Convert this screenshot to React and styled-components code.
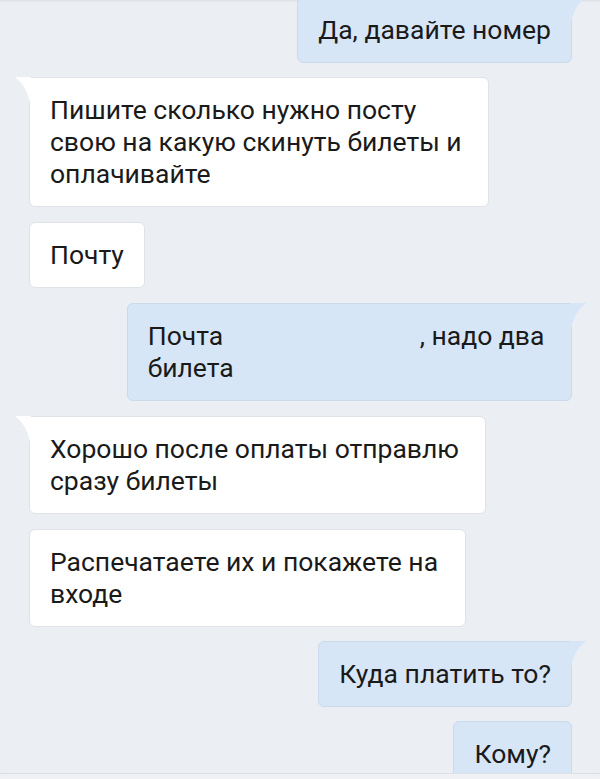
import React from 'react';
import styled, { createGlobalStyle } from 'styled-components';

const GlobalStyle = createGlobalStyle`
  html, body {
    margin: 0;
    padding: 0;
  }
  body {
    background: #ebeef3;
    font-family: Roboto, "Noto Sans", "Liberation Sans", sans-serif;
  }
`;

const Screen = styled.div`
  height: 779px;
  display: flex;
  flex-direction: column;
  overflow: hidden;
  background: #ebeef3;
`;

const Feed = styled.div`
  position: relative;
  flex: 1;
  overflow: hidden;
  display: flex;
  flex-direction: column;
  padding: 0 28px 0 29px;
  box-shadow: inset 0 2px 2px -1px rgba(0, 0, 0, 0.08);
`;

const Row = styled.div`
  display: flex;
  justify-content: ${(p) => (p.$out ? 'flex-end' : 'flex-start')};
  margin-top: ${(p) => p.$gap}px;
  flex-shrink: 0;
`;

const Bubble = styled.div`
  position: relative;
  box-sizing: border-box;
  padding: 16px 20px;
  background: ${(p) => (p.$out ? '#d7e6f7' : '#ffffff')};
  border: 1px solid ${(p) => (p.$out ? '#cbd9ea' : '#dfe3e8')};
  border-radius: 6px;
  ${(p) => p.$tail && (p.$out ? 'border-top-right-radius: 0;' : 'border-top-left-radius: 0;')}
  color: #1a1a1a;
  font-size: 26.5px;
  line-height: 32px;
  white-space: pre;
`;

const Tail = styled.svg`
  position: absolute;
  top: -1px;
  width: 18px;
  height: 26px;
  ${(p) => (p.$out ? 'right: -17px;' : 'left: -17px;')}
`;

const Hidden = styled.span`
  display: inline-block;
  width: ${(p) => p.$w}px;
`;

const Footer = styled.div`
  height: 5px;
  flex-shrink: 0;
  background: #eff1f4;
  border-top: 1px solid #dde1e6;
`;

function BubbleTail({ out }) {
  const fill = out ? '#d7e6f7' : '#ffffff';
  const d = out
    ? 'M0 0 L16 0 Q4 9 1 26 L0 26 Z'
    : 'M18 0 L2 0 Q14 9 17 26 L18 26 Z';
  return (
    <Tail $out={out} viewBox="0 0 18 26">
      <path d={d} fill={fill} />
    </Tail>
  );
}

const messages = [
  { out: true, tail: true, gap: -3, text: 'Да, давайте номер' },
  {
    out: false,
    tail: true,
    gap: 14,
    text: 'Пишите сколько нужно посту\nсвою на какую скинуть билеты и \nоплачивайте',
  },
  { out: false, gap: 15, text: 'Почту' },
  { out: true, tail: true, gap: 15, email: true },
  { out: false, tail: true, gap: 15, text: 'Хорошо после оплаты отправлю \nсразу билеты' },
  { out: false, gap: 15, text: 'Распечатаете их и покажете на \nвходе' },
  { out: true, tail: true, gap: 14, text: 'Куда платить то?' },
  { out: true, gap: 14, text: 'Кому?' },
];

export default function App() {
  return (
    <>
      <GlobalStyle />
      <Screen>
        <Feed>
          {messages.map((m, i) => (
            <Row key={i} $out={m.out} $gap={m.gap}>
              <Bubble $out={m.out} $tail={m.tail}>
                {m.tail && <BubbleTail out={m.out} />}
                {m.email ? (
                  <>
                    {'Почта '}
                    <Hidden $w={190} />
                    {', надо два \nбилета'}
                  </>
                ) : (
                  m.text
                )}
              </Bubble>
            </Row>
          ))}
        </Feed>
        <Footer />
      </Screen>
    </>
  );
}
